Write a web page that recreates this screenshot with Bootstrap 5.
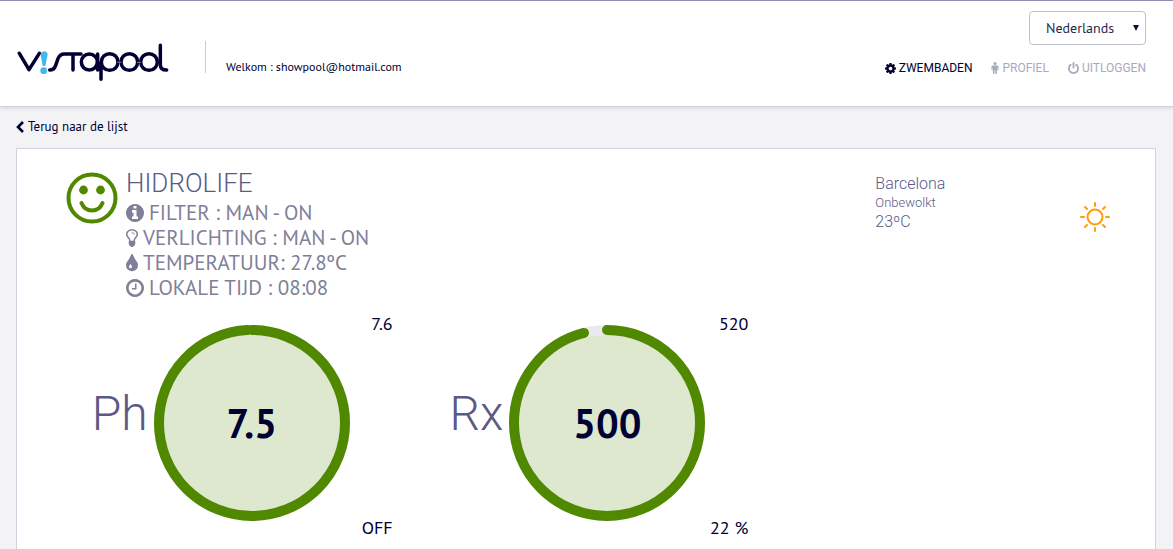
<!DOCTYPE html>
<html lang="nl">
<head>
<meta charset="utf-8">
<meta name="viewport" content="width=device-width, initial-scale=1">
<title>Vistapool</title>
<link href="https://cdn.jsdelivr.net/npm/bootstrap@5.3.0/dist/css/bootstrap.min.css" rel="stylesheet">
<style>
:root{--ink:#000033;--soft:#7f7f99;--mid:#5a5a85;--ok:#508800}
body{background:#f3f3f6;color:var(--ink);font-family:"PT Sans","Noto Sans",sans-serif;font-size:13px;line-height:16px}
a{color:inherit;text-decoration:none}
.topbar{background:#fff;border-top:1px solid #8f8fb0;border-bottom:1px solid #d2d2de;box-shadow:0 1px 4px #d2d2de;padding:10px 27px 0 17px;height:107px}
.brand{margin-top:31px}
.welcome{border-left:1px solid #ccc;height:32px;margin:30px 0 0 36px;padding:18px 0 0 20px;font-size:12px}
.lang{width:117px;height:34px;border:1px solid #bfbfd4;border-radius:4px;color:#26264f;padding:0 24px 0 16px;font-size:14px;
background:#fff url("data:image/svg+xml,%3Csvg xmlns='http://www.w3.org/2000/svg' viewBox='0 0 6 6'%3E%3Cpath d='M0 0h6L3 6z' fill='%23111138'/%3E%3C/svg%3E") no-repeat right 6px center/6px 6px}
.menu{font:12px/16px Roboto,sans-serif;gap:19px;margin-top:15px;color:#a9a9bd}
.menu a{display:flex;align-items:center;gap:3px}
.menu .active{color:var(--ink)}
svg{fill:currentColor;flex:none}
.panel{background:#fff;border:1px solid #d2d2de;padding:22px 35px 24px 36px}
.back{padding:12px 0 13px;gap:4px;display:inline-flex;align-items:center}
main{padding:0 17px 0 16px}
.light{font-family:Roboto,sans-serif;font-weight:300;color:var(--mid)}
.overview{padding-left:13px;gap:8px}
.title{font-size:26px;line-height:24px;margin:0 0 5px}
.status{font-size:21px;line-height:25px;color:var(--soft)}
.status li{display:flex;align-items:center;gap:5px}
.place{font-size:16px;line-height:19px}
.weather{padding:3px 0 0 111px}
.condition{font-size:13px}
.sun{margin:31px 10px 0 auto}
.ok{color:var(--ok)}
.meters{padding-top:12px}
.meter{padding-right:16px}
.meter-name{font-size:48px;line-height:56px;margin:74px 6px 0 0}
.dial{width:196px;height:196px;margin-top:13px}
.dial strong{position:absolute;inset:0;display:flex;align-items:center;justify-content:center;font-size:40px}
.limits{width:43px;height:228px;font-size:18px;line-height:24px;white-space:nowrap}
</style>
</head>
<body>
<header class="topbar d-flex align-items-start">
  <a class="brand" href="#" aria-label="Vistapool">
    <svg width="152" height="40" viewBox="50 36 456 120" stroke="#000033" stroke-width="10.500" stroke-linecap="round" stroke-linejoin="round" style="fill:none">
      <path d="M57 70 86 119 117 70M148 120c10 0 15-5 18-14l7-20c4-10 9-14 19-14h50M218 73v47M292 72v48M302 98v50M480 46v58c0 10 6 16 19 16"/>
      <circle cx="267" cy="96" r="24"/><circle cx="328" cy="96" r="25"/><circle cx="387" cy="96" r="25"/><circle cx="446" cy="96" r="25"/>
      <path d="M352 97h10M411 97h10" stroke="#fff" stroke-width="1.500"/>
      <path d="M121 74c0-14 21-14 21 0l-7 34h-8z" fill="#45b8ea" stroke="none"/><circle cx="130" cy="122" r="10" fill="#45b8ea" stroke="none"/>
    </svg>
  </a>
  <div class="welcome">Welkom : showpool@hotmail.com</div>
  <div class="ms-auto d-flex flex-column align-items-end">
    <select class="form-select lang" aria-label="Taal"><option>Nederlands</option><option>English</option></select>
    <nav class="menu d-flex">
      <a class="active" href="#"><svg width="11" height="11" viewBox="128 128 1536 1536"><path d="M1152 896q0-106-75-181t-181-75-181 75-75 181 75 181 181 75 181-75 75-181zm512-109v222q0 12-8 23t-20 13l-185 28q-19 54-39 91 35 50 107 138 10 12 10 25t-9 23q-27 37-99 108t-94 71q-12 0-26-9l-138-108q-44 23-91 38-16 136-29 186-7 28-36 28h-222q-14 0-24.500-8.500t-11.500-21.500l-28-184q-49-16-90-37l-141 107q-10 9-25 9-14 0-25-11-126-114-165-168-7-10-7-23 0-12 8-23 15-21 51-66.500t54-70.500q-27-50-41-99l-183-27q-13-2-21-12.500t-8-23.500v-222q0-12 8-23t19-13l186-28q14-46 39-92-40-57-107-138-10-12-10-24 0-10 9-23 26-36 98.500-107.500t94.500-71.500q13 0 26 10l138 107q44-23 91-38 16-136 29-186 7-28 36-28h222q14 0 24.500 8.500t11.500 21.500l28 184q49 16 90 37l142-107q9-9 24-9 13 0 25 10 129 119 165 170 7 8 7 22 0 12-8 23-15 21-51 66.500t-54 70.500q26 50 41 98l183 28q13 2 21 12.500t8 23.500z"/></svg>ZWEMBADEN</a>
      <a href="#"><svg width="8" height="12" viewBox="0 0 8 12"><circle cx="4" cy="1.600" r="1.600"/><path d="M1.500 3.500h5q1 0 1 1v3.200q0 .7-.6.7t-.6-.7V5.500H6v5.800q0 .7-.8.7t-.8-.7V8.200h-.8v3.100q0 .7-.8.7T2 11.300V5.500h-.3v2.200q0 .7-.6.7t-.6-.7V4.500q0-1 1-1z"/></svg>PROFIEL</a>
      <a href="#"><svg width="11" height="12" viewBox="128 0 1536 1664"><path d="M1664 896q0 156-61 298t-164 245-245 164-298 61-298-61-245-164-164-245-61-298q0-182 80.500-343t226.500-270q43-32 95.500-25t83.500 50q32 42 24.500 94.500t-49.500 84.500q-98 74-151.500 181t-53.500 228q0 104 40.500 198.500t109.500 163.500 163.500 109.500 198.500 40.500 198.500-40.500 163.500-109.500 109.500-163.500 40.500-198.500q0-121-53.500-228t-151.500-181q-42-32-49.500-84.500t24.500-94.500q31-43 84-50t95 25q146 109 226.500 270t80.500 343zm-640-768v640q0 52-38 90t-90 38-90-38-38-90v-640q0-52 38-90t90-38 90 38 38 90z"/></svg>UITLOGGEN</a>
    </nav>
  </div>
</header>
<main>
  <a class="back" href="#"><svg width="8" height="12" viewBox="0 0 8 12"><path d="M7 1 2 6l5 5" fill="none" stroke="currentColor" stroke-width="2.600"/></svg>Terug naar de lijst</a>
  <section class="panel">
    <div class="row g-0">
      <div class="col-8 d-flex overview">
        <svg class="ok" width="52" height="54" viewBox="0 0 52 54"><circle cx="26" cy="27" r="23.500" fill="none" stroke="currentColor" stroke-width="4"/><circle cx="17.500" cy="19" r="4.400"/><circle cx="34.500" cy="19" r="4.400"/><path d="M15.500 32c4 10 17 10 21 0" fill="none" stroke="currentColor" stroke-width="4" stroke-linecap="round"/></svg>
        <div>
          <h1 class="title light">HIDROLIFE</h1>
          <ul class="status list-unstyled mb-0">
            <li><svg width="18" height="18" viewBox="128 128 1536 1536"><path d="M1152 1376v-160q0-14-9-23t-23-9h-96v-512q0-14-9-23t-23-9h-320q-14 0-23 9t-9 23v160q0 14 9 23t23 9h96v320h-96q-14 0-23 9t-9 23v160q0 14 9 23t23 9h448q14 0 23-9t9-23zm-128-896v-160q0-14-9-23t-23-9h-192q-14 0-23 9t-9 23v160q0 14 9 23t23 9h192q14 0 23-9t9-23zm640 416q0 209-103 385.500t-279.500 279.500-385.500 103-385.500-103-279.500-279.500-103-385.500 103-385.500 279.500-279.500 385.500-103 385.500 103 279.500 279.500 103 385.500z"/></svg>FILTER : MAN - ON</li>
            <li><svg width="12" height="18" viewBox="384 128 1024 1536"><path d="M1120 576q0 13-9.500 22.500t-22.500 9.500-22.500-9.500-9.500-22.500q0-46-54-71t-106-25q-13 0-22.500-9.500t-9.500-22.500 9.500-22.500 22.500-9.500q50 0 99.500 16t87 54 37.500 90zm160 0q0-72-34.500-134t-90-101.500-123-62-136.500-22.500-136.500 22.500-123 62-90 101.500-34.500 134q0 101 68 180 10 11 30.500 33t30.500 33q128 153 141 298h228q13-145 141-298 10-11 30.500-33t30.500-33q68-79 68-180zm128 0q0 155-103 268-45 49-74.500 87t-59.500 95.500-34 107.500q47 28 47 82 0 37-25 64 25 27 25 64 0 52-45 81 13 23 13 47 0 46-31.500 71t-77.500 25q-20 44-60 70t-87 26-87-26-60-70q-46 0-77.500-25t-31.500-71q0-24 13-47-45-29-45-81 0-37 25-64-25-27-25-64 0-54 47-82-4-50-34-107.500t-59.500-95.500-74.500-87q-103-113-103-268 0-99 44.500-184.500t117-142 164-89 186.500-32.500 186.500 32.500 164 89 117 142 44.500 184.500z"/></svg>VERLICHTING : MAN - ON</li>
            <li><svg width="12" height="18" viewBox="384 64 1024 1536"><path d="M896 1152q0-36-20-69-1-1-15.500-22.500t-25.500-38-25-44-21-50.500q-4-16-21-16t-21 16q-7 23-21 50.500t-25 44-25.500 38-15.500 22.500q-20 33-20 69 0 53 37.500 90.500t90.500 37.500 90.500-37.500 37.500-90.500zm512-128q0 212-150 362t-362 150-362-150-150-362q0-145 81-275 6-9 62.500-90.500t101-151 99.500-178 83-201.500q9-30 34-47t51-17 51.500 17 33.500 47q28 93 83 201.500t99.500 178 101 151 62.500 90.500q81 127 81 275z"/></svg>TEMPERATUUR: 27.8ºC</li>
            <li><svg width="18" height="18" viewBox="128 128 1536 1536"><path d="M1024 544v448q0 14-9 23t-23 9h-320q-14 0-23-9t-9-23v-64q0-14 9-23t23-9h224v-352q0-14 9-23t23-9h64q14 0 23 9t9 23zm416 352q0-148-73-273t-198-198-273-73-273 73-198 198-73 273 73 273 198 198 273 73 273-73 198-198 73-273zm224 0q0 209-103 385.500t-279.500 279.500-385.500 103-385.500-103-279.500-279.500-103-385.500 103-385.500 279.500-279.500 385.500-103 385.500 103 279.500 279.500 103 385.500z"/></svg>LOKALE TIJD : 08:08</li>
          </ul>
        </div>
      </div>
      <div class="col-4 d-flex align-items-start light place">
        <div class="weather"><div>Barcelona</div><div class="condition">Onbewolkt</div><div>23ºC</div></div>
        <svg class="sun" width="30" height="30" viewBox="0 0 30 30" stroke="#ff9d0a" stroke-width="2" stroke-linecap="round" style="fill:none"><circle cx="15" cy="15" r="7.500"/><path d="M15 1v3M15 26v3M1 15h3M26 15h3M5 5l2 2M23 23l2 2M5 25l2-2M23 7l2-2"/></svg>
      </div>
    </div>
    <div class="row g-0 meters">
      <div class="col-4 meter d-flex justify-content-end">
        <div class="meter-name light">Ph</div>
        <div class="dial position-relative"><svg width="196" height="196" viewBox="0 0 196 196"><circle cx="98" cy="98" r="93" fill="#dde8cf" stroke="#e9e9ee" stroke-width="10"/><circle cx="98" cy="98" r="93" fill="none" stroke="#508800" stroke-width="10" stroke-linecap="round" pathLength="100" stroke-dasharray="99.200 100" transform="rotate(-90 98 98)"/></svg><strong>7.5</strong></div>
        <div class="limits d-flex flex-column justify-content-between text-end"><span>7.6</span><span>OFF</span></div>
      </div>
      <div class="col-4 meter d-flex justify-content-end">
        <div class="meter-name light">Rx</div>
        <div class="dial position-relative"><svg width="196" height="196" viewBox="0 0 196 196"><circle cx="98" cy="98" r="93" fill="#dde8cf" stroke="#e9e9ee" stroke-width="10"/><circle cx="98" cy="98" r="93" fill="none" stroke="#508800" stroke-width="10" stroke-linecap="round" pathLength="100" stroke-dasharray="96 100" transform="rotate(-90 98 98)"/></svg><strong>500</strong></div>
        <div class="limits d-flex flex-column justify-content-between text-end"><span>520</span><span>22 %</span></div>
      </div>
    </div>
  </section>
</main>
<script src="https://cdn.jsdelivr.net/npm/bootstrap@5.3.0/dist/js/bootstrap.bundle.min.js"></script>
</body>
</html>
